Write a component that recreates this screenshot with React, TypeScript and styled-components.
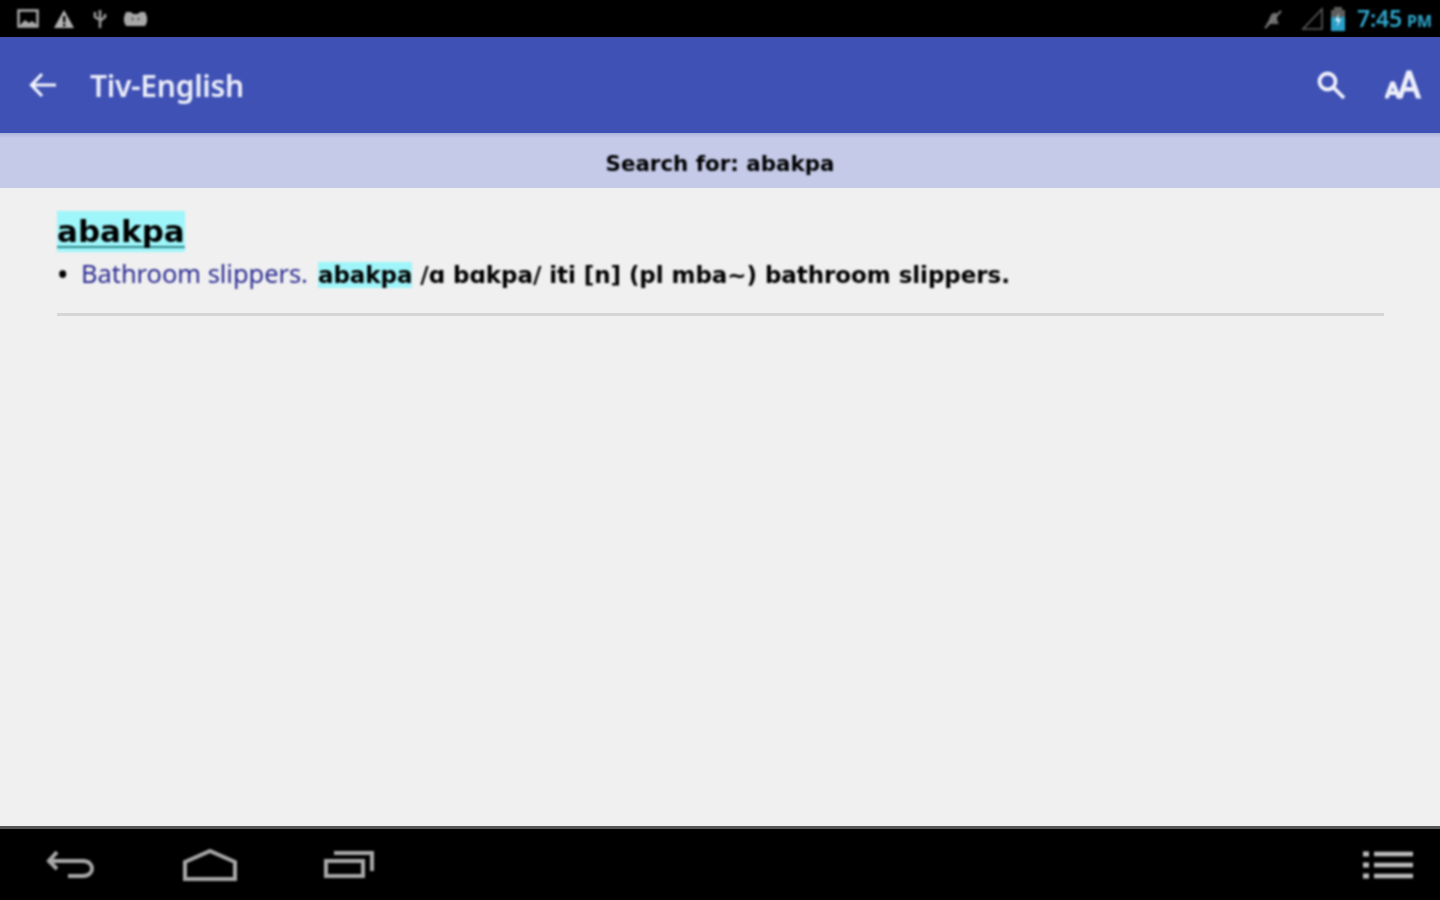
import React from "react";
import styled, { createGlobalStyle, css } from "styled-components";

const GlobalStyle = createGlobalStyle`
  html, body {
    margin: 0;
    padding: 0;
    height: 100%;
    background: #f0f0f0;
  }
  #root {
    height: 100%;
  }
`;

// the source capture is a soft upscale, so bar contents get a slight blur
const soft = css`
  filter: blur(0.8px);
`;

const Screen = styled.div`
  width: 1440px;
  height: 900px;
  display: flex;
  flex-direction: column;
  overflow: hidden;
  font-family: "Noto Sans", "Open Sans", sans-serif;
`;

const StatusBar = styled.div`
  height: 37px;
  flex: none;
  background: #000;
  display: flex;
  align-items: center;
  justify-content: space-between;
  padding: 0 8px 0 17px;
`;

const StatusGroup = styled.div`
  display: flex;
  align-items: center;
  ${soft}
`;

const StatusIcon = styled.span<{ $left?: number }>`
  display: flex;
  margin-left: ${(p) => p.$left ?? 0}px;
`;

const Clock = styled.span`
  color: #2fa6cc;
  font-size: 23px;
  font-weight: 600;
  letter-spacing: -0.2px;
  line-height: 37px;
  margin-left: 11px;
  padding-top: 3px;
`;

const Meridiem = styled.span`
  font-size: 16px;
  font-weight: 700;
  letter-spacing: 0;
  margin-left: 5px;
`;

const AppBar = styled.div`
  height: 96px;
  flex: none;
  background: #3f51b5;
  display: flex;
  align-items: center;
  padding: 0 16px 0 29px;
  color: #f2f4fb;
  > * {
    ${soft}
  }
`;

const Title = styled.div`
  font-size: 30px;
  font-weight: 600;
  margin-left: 33px;
  padding-top: 1px;
  flex: 1;
  color: #eceef9;
  letter-spacing: -0.3px;
`;

const ActionButton = styled.div<{ $width: number }>`
  width: ${(p) => p.$width}px;
  display: flex;
  justify-content: center;
  align-items: center;
`;

const SearchBar = styled.div`
  height: 55px;
  box-sizing: border-box;
  padding-top: 6px;
  flex: none;
  background: linear-gradient(#aeb4dc 0, #c5cae9 5px);
  display: flex;
  align-items: center;
  justify-content: center;
  color: #000;
  font-family: "DejaVu Sans", sans-serif;
  font-size: 21.4px;
  font-weight: 700;
`;

const SearchLabel = styled.span`
  ${soft}
`;

const Content = styled.main`
  flex: 1;
  background: #f0f0f0;
  padding: 23px 56px 0 57px;
`;

const Highlight = styled.span`
  background: #9ff6fa;
`;

const HeadwordMark = styled(Highlight)`
  display: inline-block;
  height: 41px;
  text-decoration: underline;
  text-decoration-thickness: 2px;
  text-underline-offset: 4px;
  text-decoration-color: #2f8487;
  text-decoration-skip-ink: none;
`;

const Headword = styled.div`
  font-family: "DejaVu Sans", sans-serif;
  font-size: 31px;
  font-weight: 700;
  line-height: 41px;
  color: #000;
  ${soft}
`;

const Definition = styled.div`
  font-size: 25.4px;
  line-height: 34px;
  margin-top: 4px;
  white-space: nowrap;
  display: flex;
  align-items: baseline;
  ${soft}
`;

const Bullet = styled.span`
  width: 24px;
  color: #000;
  margin-left: 1px;
  flex: none;
  font-size: 25px;
  font-weight: 700;
`;

const Gloss = styled.span`
  color: #2a2a92;
  margin-right: 10px;
  margin-left: -1px;
`;

const Example = styled.span`
  font-family: "DejaVu Sans", sans-serif;
  font-size: 23px;
  font-weight: 700;
  letter-spacing: -0.06px;
  color: #000;
`;

const Divider = styled.div`
  height: 3px;
  background: #d6d6d6;
  margin-top: 21px;
`;

const NavBar = styled.div`
  height: 74px;
  flex: none;
  background: #000;
  border-top: 3px solid #555;
  box-sizing: border-box;
  display: flex;
  align-items: center;
  justify-content: space-between;
  padding: 0 27px 0 46px;
  > * {
    ${soft}
  }
`;

const NavGroup = styled.div`
  display: flex;
  align-items: center;
  gap: 87px;
`;

const ImageIcon = () => (
  <svg width="22" height="20" viewBox="0 0 22 20" fill="none">
    <rect x="1.5" y="1.5" width="19" height="16" stroke="#aaa" strokeWidth="2.5" />
    <path d="M3 16l5-5 4 3 3-2 4 3v2H3z" fill="#aaa" />
  </svg>
);

const WarningIcon = () => (
  <svg width="22" height="20" viewBox="0 0 22 20">
    <path d="M11 1l10 18H1z" fill="#b4b4b4" />
    <rect x="10" y="7" width="2.4" height="6.5" fill="#000" />
    <rect x="10" y="15" width="2.4" height="2.4" fill="#000" />
  </svg>
);

const UsbIcon = () => (
  <svg width="14" height="22" viewBox="0 0 14 22" fill="none" stroke="#9a9a9a" strokeWidth="2.6">
    <path d="M7 2v18M2 4v5l5 3M12 6v3l-5 4" />
  </svg>
);

const GamepadIcon = () => (
  <svg width="23" height="16" viewBox="0 0 23 16">
    <path d="M2 1h5l2 2h5l2-2h5l2 5v5l-2 4H2L0 11V6z" fill="#a8a8a8" />
    <circle cx="8.5" cy="8" r="1.4" fill="#666" />
    <circle cx="14.5" cy="8" r="1.4" fill="#666" />
  </svg>
);

const MuteIcon = () => (
  <svg width="20" height="22" viewBox="0 0 20 22" fill="none">
    <path d="M3 16c3-2 3-6 5-9s6-3 6 0c0 4 0 6 2 9z" fill="#6e6e6e" />
    <path d="M2 20L18 3" stroke="#777" strokeWidth="2.2" />
  </svg>
);

const SignalIcon = () => (
  <svg width="22" height="24" viewBox="0 0 22 24" fill="none">
    <path d="M21 2v20H2z" stroke="#5c5c5c" strokeWidth="1.6" />
  </svg>
);

const BatteryIcon = () => (
  <svg width="16" height="26" viewBox="0 0 16 26">
    <rect x="4" y="1" width="8" height="4" fill="#5e5e5e" />
    <rect x="1" y="4" width="14" height="8" fill="#5e5e5e" />
    <rect x="1" y="11" width="14" height="14" fill="#2a9fc8" />
    <path d="M9 7l-4 8h3l-1 6 4-8H8z" fill="#d9f1f9" />
  </svg>
);

const BackArrow = () => (
  <svg width="28" height="28" viewBox="0 0 28 28" fill="none" stroke="#f4f6fc" strokeWidth="3.2">
    <path d="M27 14H3M13 3L2.5 14 13 25" />
  </svg>
);

const SearchIcon = () => (
  <svg width="30" height="30" viewBox="0 0 30 30" fill="none" stroke="#f0f2fb" strokeWidth="3.8">
    <circle cx="11.5" cy="11.5" r="8" />
    <path d="M17.5 17.5L28 28" />
  </svg>
);

const TextSizeIcon = () => (
  <svg width="38" height="30" viewBox="0 0 38 30" fill="#eef0fa" stroke="#eef0fa" strokeWidth="1.2">
    <path d="M0 28L6 12h3.4l6 16h-3.2l-1.3-3.6H4.6L3.2 28zm5.6-6.4h4.2L7.7 15.6z" />
    <path d="M13 28L22 1h4l9.5 27h-4l-2.3-7H19.2L17 28zm7.3-10.4h7.7L24.1 6z" />
  </svg>
);

const NavBack = () => (
  <svg width="50" height="30" viewBox="0 0 50 30" fill="none" stroke="#a8a8a8" strokeWidth="4">
    <path d="M11 2L3 11l8 8" />
    <path d="M3 11h34c12 0 12 15 0 15H22" />
  </svg>
);

const NavHome = () => (
  <svg width="54" height="32" viewBox="0 0 54 32" fill="none" stroke="#a8a8a8" strokeWidth="4">
    <path d="M2 13L27 2l25 11v17H2z" />
  </svg>
);

const NavRecents = () => (
  <svg width="50" height="28" viewBox="0 0 50 28" fill="none" stroke="#a8a8a8" strokeWidth="4">
    <rect x="2" y="10" width="37" height="15" />
    <path d="M10 2h38v18" />
  </svg>
);

const NavMenu = () => (
  <svg width="50" height="28" viewBox="0 0 50 28" fill="none" stroke="#bdbdbd" strokeWidth="4.4">
    <path d="M0 3h6M0 14h6M0 25h6" strokeWidth="5" />
    <path d="M11 3h39M11 14h39M11 25h39" />
  </svg>
);

const App = () => {
  return (
    <Screen>
      <GlobalStyle />
      <StatusBar>
        <StatusGroup>
          <StatusIcon>
            <ImageIcon />
          </StatusIcon>
          <StatusIcon $left={14}>
            <WarningIcon />
          </StatusIcon>
          <StatusIcon $left={18}>
            <UsbIcon />
          </StatusIcon>
          <StatusIcon $left={17}>
            <GamepadIcon />
          </StatusIcon>
        </StatusGroup>
        <StatusGroup>
          <StatusIcon>
            <MuteIcon />
          </StatusIcon>
          <StatusIcon $left={18}>
            <SignalIcon />
          </StatusIcon>
          <StatusIcon $left={7}>
            <BatteryIcon />
          </StatusIcon>
          <Clock>
            7:45<Meridiem>PM</Meridiem>
          </Clock>
        </StatusGroup>
      </StatusBar>
      <AppBar>
        <BackArrow />
        <Title>Tiv-English</Title>
        <ActionButton $width={106}>
          <SearchIcon />
        </ActionButton>
        <ActionButton $width={40}>
          <TextSizeIcon />
        </ActionButton>
      </AppBar>
      <SearchBar>
        <SearchLabel>Search for: abakpa</SearchLabel>
      </SearchBar>
      <Content>
        <Headword>
          <HeadwordMark>abakpa</HeadwordMark>
        </Headword>
        <Definition>
          <Bullet>•</Bullet>
          <Gloss>Bathroom slippers.</Gloss>
          <Example>
            <Highlight>abakpa</Highlight> /ɑ bɑkpa/ iti [n] (pl mba~) bathroom slippers.
          </Example>
        </Definition>
        <Divider />
      </Content>
      <NavBar>
        <NavGroup>
          <NavBack />
          <NavHome />
          <NavRecents />
        </NavGroup>
        <NavMenu />
      </NavBar>
    </Screen>
  );
};

export default App;
